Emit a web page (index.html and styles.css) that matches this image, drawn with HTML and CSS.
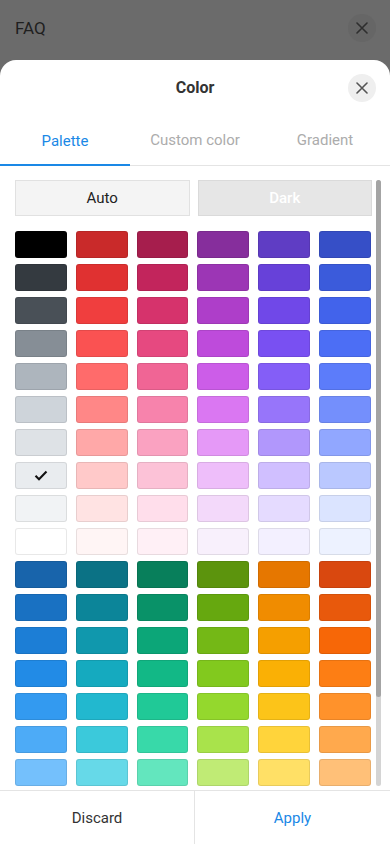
FILE: index.html
```html
<!DOCTYPE html>
<html lang="en">
<head>
<meta charset="utf-8">
<meta name="viewport" content="width=device-width, initial-scale=1">
<title>Color</title>
<link rel="stylesheet" href="styles.css">
</head>
<body>
<div class="page">
  <header class="backdrop-bar">
    <span class="backdrop-title">FAQ</span>
    <span class="backdrop-close">
      <svg width="12" height="12" viewBox="0 0 12 12"><path d="M1 1L11 11M11 1L1 11" stroke="#2e2e2e" stroke-width="1.6" stroke-linecap="round"/></svg>
    </span>
  </header>
  <section class="sheet">
    <div class="sheet-head">
      <h1 class="sheet-title">Color</h1>
      <button class="sheet-close" aria-label="Close">
        <svg width="12" height="12" viewBox="0 0 12 12"><path d="M1 1L11 11M11 1L1 11" stroke="#555" stroke-width="1.6" stroke-linecap="round"/></svg>
      </button>
    </div>
    <nav class="tabs">
      <span class="tab active">Palette</span>
      <span class="tab">Custom color</span>
      <span class="tab">Gradient</span>
    </nav>
    <div class="content">
      <div class="modes">
        <button class="mode auto">Auto</button>
        <button class="mode dark">Dark</button>
      </div>
      <div class="grid">
        <span class="sw" style="background:#000000"></span><span class="sw" style="background:#c92a2a"></span><span class="sw" style="background:#a61e4d"></span><span class="sw" style="background:#862e9c"></span><span class="sw" style="background:#5f3dc4"></span><span class="sw" style="background:#364fc7"></span>
        <span class="sw" style="background:#343a40"></span><span class="sw" style="background:#e03131"></span><span class="sw" style="background:#c2255c"></span><span class="sw" style="background:#9c36b5"></span><span class="sw" style="background:#6741d9"></span><span class="sw" style="background:#3b5bdb"></span>
        <span class="sw" style="background:#495057"></span><span class="sw" style="background:#f03e3e"></span><span class="sw" style="background:#d6336c"></span><span class="sw" style="background:#ae3ec9"></span><span class="sw" style="background:#7048e8"></span><span class="sw" style="background:#4263eb"></span>
        <span class="sw" style="background:#868e96"></span><span class="sw" style="background:#fa5252"></span><span class="sw" style="background:#e64980"></span><span class="sw" style="background:#be4bdb"></span><span class="sw" style="background:#7950f2"></span><span class="sw" style="background:#4c6ef5"></span>
        <span class="sw" style="background:#adb5bd"></span><span class="sw" style="background:#ff6b6b"></span><span class="sw" style="background:#f06595"></span><span class="sw" style="background:#cc5de8"></span><span class="sw" style="background:#845ef7"></span><span class="sw" style="background:#5c7cfa"></span>
        <span class="sw" style="background:#ced4da"></span><span class="sw" style="background:#ff8787"></span><span class="sw" style="background:#f783ac"></span><span class="sw" style="background:#da77f2"></span><span class="sw" style="background:#9775fa"></span><span class="sw" style="background:#748ffc"></span>
        <span class="sw" style="background:#dee2e6"></span><span class="sw" style="background:#ffa8a8"></span><span class="sw" style="background:#faa2c1"></span><span class="sw" style="background:#e599f7"></span><span class="sw" style="background:#b197fc"></span><span class="sw" style="background:#91a7ff"></span>
        <span class="sw selected" style="background:#e9ecef"><svg width="14" height="11" viewBox="0 0 14 11"><path d="M1.5 5.8L5 9.2L12.5 1.6" fill="none" stroke="#111" stroke-width="2.1"/></svg></span><span class="sw" style="background:#ffc9c9"></span><span class="sw" style="background:#fcc2d7"></span><span class="sw" style="background:#eebefa"></span><span class="sw" style="background:#d0bfff"></span><span class="sw" style="background:#bac8ff"></span>
        <span class="sw" style="background:#f1f3f5"></span><span class="sw" style="background:#ffe3e3"></span><span class="sw" style="background:#ffdeeb"></span><span class="sw" style="background:#f3d9fa"></span><span class="sw" style="background:#e5dbff"></span><span class="sw" style="background:#dbe4ff"></span>
        <span class="sw" style="background:#ffffff"></span><span class="sw" style="background:#fff5f5"></span><span class="sw" style="background:#fff0f6"></span><span class="sw" style="background:#f8f0fc"></span><span class="sw" style="background:#f3f0ff"></span><span class="sw" style="background:#edf2ff"></span>
        <span class="sw" style="background:#1864ab"></span><span class="sw" style="background:#0b7285"></span><span class="sw" style="background:#087f5b"></span><span class="sw" style="background:#5c940d"></span><span class="sw" style="background:#e67700"></span><span class="sw" style="background:#d9480f"></span>
        <span class="sw" style="background:#1971c2"></span><span class="sw" style="background:#0c8599"></span><span class="sw" style="background:#099268"></span><span class="sw" style="background:#66a80f"></span><span class="sw" style="background:#f08c00"></span><span class="sw" style="background:#e8590c"></span>
        <span class="sw" style="background:#1c7ed6"></span><span class="sw" style="background:#1098ad"></span><span class="sw" style="background:#0ca678"></span><span class="sw" style="background:#74b816"></span><span class="sw" style="background:#f59f00"></span><span class="sw" style="background:#f76707"></span>
        <span class="sw" style="background:#228be6"></span><span class="sw" style="background:#15aabf"></span><span class="sw" style="background:#12b886"></span><span class="sw" style="background:#82c91e"></span><span class="sw" style="background:#fab005"></span><span class="sw" style="background:#fd7e14"></span>
        <span class="sw" style="background:#339af0"></span><span class="sw" style="background:#22b8cf"></span><span class="sw" style="background:#20c997"></span><span class="sw" style="background:#94d82d"></span><span class="sw" style="background:#fcc419"></span><span class="sw" style="background:#ff922b"></span>
        <span class="sw" style="background:#4dabf7"></span><span class="sw" style="background:#3bc9db"></span><span class="sw" style="background:#38d9a9"></span><span class="sw" style="background:#a9e34b"></span><span class="sw" style="background:#ffd43b"></span><span class="sw" style="background:#ffa94d"></span>
        <span class="sw" style="background:#74c0fc"></span><span class="sw" style="background:#66d9e8"></span><span class="sw" style="background:#63e6be"></span><span class="sw" style="background:#c0eb75"></span><span class="sw" style="background:#ffe066"></span><span class="sw" style="background:#ffc078"></span>
        <span class="sw" style="background:#a5d8ff"></span><span class="sw" style="background:#99e9f2"></span><span class="sw" style="background:#96f2d7"></span><span class="sw" style="background:#d8f5a2"></span><span class="sw" style="background:#ffec99"></span><span class="sw" style="background:#ffd8a8"></span>
        <span class="sw" style="background:#d0ebff"></span><span class="sw" style="background:#c5f6fa"></span><span class="sw" style="background:#c3fae8"></span><span class="sw" style="background:#e9fac8"></span><span class="sw" style="background:#fff3bf"></span><span class="sw" style="background:#ffe8cc"></span>
        <span class="sw" style="background:#e7f5ff"></span><span class="sw" style="background:#e3fafc"></span><span class="sw" style="background:#e6fcf5"></span><span class="sw" style="background:#f4fce3"></span><span class="sw" style="background:#fff9db"></span><span class="sw" style="background:#fff4e6"></span>
      </div>
      <div class="scrollbar"><span class="thumb"></span></div>
    </div>
    <footer class="actions">
      <button class="action discard">Discard</button>
      <button class="action apply">Apply</button>
    </footer>
  </section>
</div>
</body>
</html>
```

FILE: styles.css
```css
* { box-sizing: border-box; }
html, body { margin: 0; padding: 0; }
body {
  width: 390px;
  height: 844px;
  overflow: hidden;
  font-family: Roboto, "Noto Sans", "Liberation Sans", sans-serif;
  background: #6b6b6b;
}
button { font-family: inherit; border: 0; background: none; padding: 0; cursor: pointer; }
.page { display: flex; flex-direction: column; height: 844px; }

.backdrop-bar {
  height: 60px;
  flex: none;
  display: flex;
  align-items: center;
  justify-content: space-between;
  padding: 0 14px 4px 15px;
}
.backdrop-title { font-size: 17px; color: #1f1f1f; }
.backdrop-close {
  width: 28px; height: 28px; border-radius: 50%;
  background: #666666;
  display: flex; align-items: center; justify-content: center;
}

.sheet {
  flex: 1;
  background: #fff;
  border-radius: 16px 16px 0 0;
  display: flex;
  flex-direction: column;
  overflow: hidden;
}
.sheet-head {
  height: 54px;
  flex: none;
  display: flex;
  align-items: center;
  justify-content: center;
  position: relative;
}
.sheet-title { margin: 0; font-size: 16px; font-weight: 700; color: #333; }
.sheet-close {
  position: absolute;
  right: 14px; top: 14px;
  width: 28px; height: 28px; border-radius: 50%;
  background: #efefef;
  display: flex; align-items: center; justify-content: center;
}

.tabs {
  height: 52px;
  flex: none;
  display: grid;
  grid-template-columns: repeat(3, 1fr);
  border-bottom: 1px solid #e4e4e4;
}
.tab {
  display: flex; align-items: center; justify-content: center;
  font-size: 15px; color: #acacac;
  padding-top: 1px;
}
.tab.active {
  color: #1a88e6;
  border-bottom: 2px solid #1a88e6;
  margin-bottom: -1px;
  padding-top: 3px;
}

.content {
  flex: 1;
  position: relative;
  overflow: hidden;
  padding: 14px 0 0 15px;
}
.modes {
  width: 357px;
  display: grid;
  grid-template-columns: 1fr 1fr;
  gap: 8px;
}
.mode {
  height: 36px;
  font-size: 15px;
  border: 1px solid #e1e1e1;
  display: flex; align-items: center; justify-content: center;
}
.mode.auto { background: #f4f4f4; color: #222; }
.mode.dark { background: #e6e6e6; color: #fff; font-weight: 500; border-color: #dadada; }

.grid {
  margin-top: 15px;
  width: 356px;
  display: grid;
  grid-template-columns: repeat(6, 1fr);
  column-gap: 9px;
  row-gap: 6px;
}
.sw {
  height: 27px;
  border-radius: 3px;
  box-shadow: inset 0 0 0 1px rgba(0, 0, 0, 0.09);
  display: flex; align-items: center; justify-content: center;
}

.scrollbar {
  position: absolute;
  left: 376px;
  top: 14px;
  width: 5px;
  height: 606px;
  border-radius: 3px;
  background: #d4d4d4;
}
.thumb {
  display: block;
  height: 517px;
  border-radius: 3px;
  background: #a4a4a4;
}

.actions {
  height: 54px;
  flex: none;
  display: grid;
  grid-template-columns: 195px 1fr;
  border-top: 1px solid #e4e4e4;
  background: #fff;
}
.action { font-size: 15px; }
.action.discard { color: #333; border-right: 1px solid #e4e4e4; }
.action.apply { color: #1a88e6; }
```
